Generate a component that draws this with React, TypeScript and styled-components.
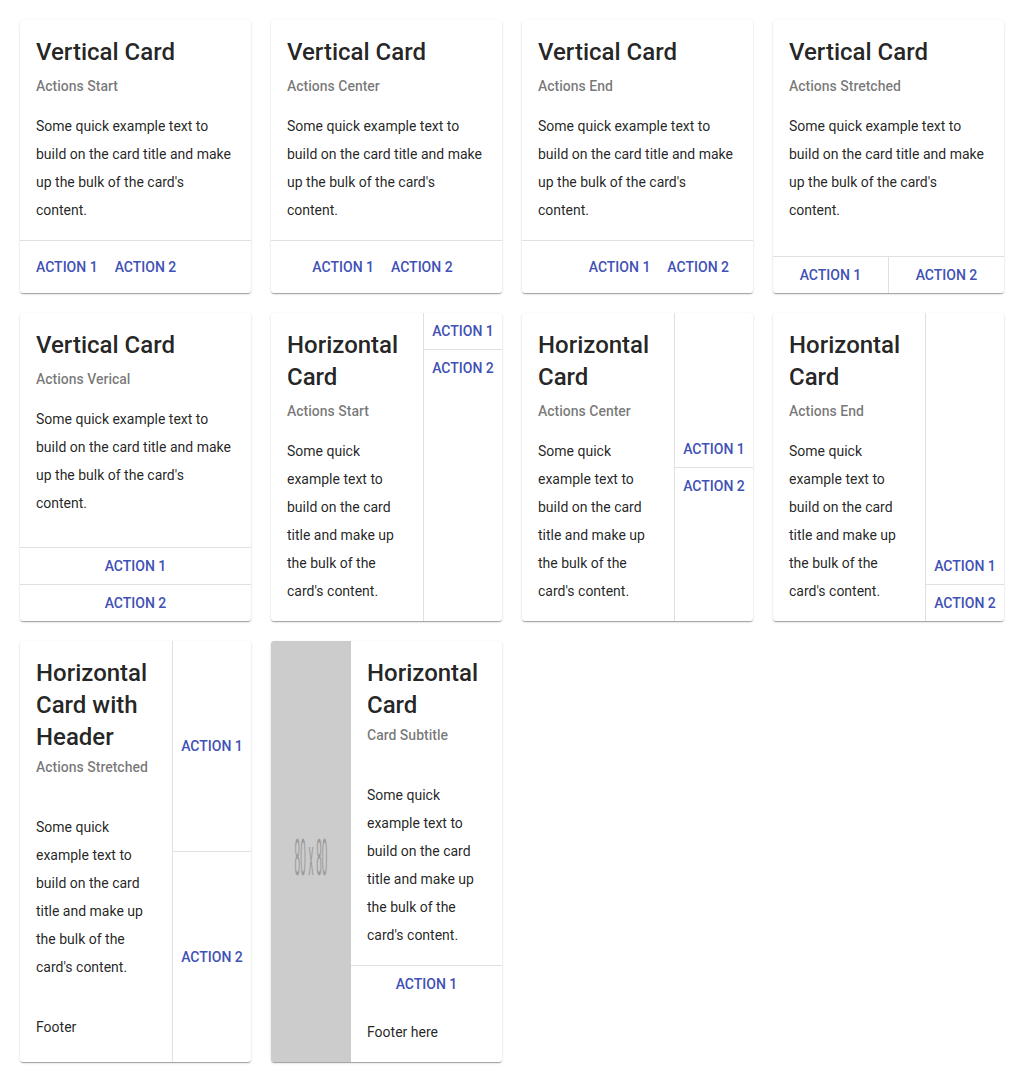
import React from "react";
import styled, { createGlobalStyle, css } from "styled-components";

const Global = createGlobalStyle`
  html, body { margin: 0; padding: 0; background: #ffffff; }
  body { font-family: Roboto, "Noto Sans", sans-serif; -webkit-font-smoothing: antialiased; }
  * { box-sizing: border-box; }
`;

const Page = styled.div`
  display: grid;
  grid-template-columns: repeat(4, 231px);
  column-gap: 20px;
  row-gap: 20px;
  padding: 20px;
  align-items: stretch;
`;

const Card = styled.div<{ $horizontal?: boolean }>`
  display: flex;
  flex-direction: ${(p) => (p.$horizontal ? "row" : "column")};
  background: #fff;
  border-radius: 3px;
  overflow: hidden;
  box-shadow: 0 2px 1px -1px rgba(0, 0, 0, 0.2), 0 1px 1px 0 rgba(0, 0, 0, 0.14),
    0 1px 3px 0 rgba(0, 0, 0, 0.12);
  color: rgba(0, 0, 0, 0.87);
`;

const Main = styled.div`
  display: flex;
  flex-direction: column;
  flex: 1;
  min-width: 0;
`;

const Content = styled.div<{ $grow?: boolean }>`
  padding: 16px;
  ${(p) => p.$grow && "flex: 1;"}
`;

const Header = styled.div`
  padding: 16px 16px 20px;
`;

const Title = styled.h2`
  margin: 0;
  font-size: 24px;
  line-height: 32px;
  font-weight: 500;
  color: rgba(0, 0, 0, 0.87);
`;

const Subtitle = styled.div<{ $tight?: boolean }>`
  margin-top: ${(p) => (p.$tight ? "4px" : "8px")};
  font-size: 14px;
  line-height: 20px;
  font-weight: 500;
  color: rgba(0, 0, 0, 0.54);
`;

const Text = styled.p<{ $flush?: boolean }>`
  margin: ${(p) => (p.$flush ? "0" : "16px 0 0")};
  font-size: 14px;
  line-height: 28px;
  font-weight: 400;
  color: rgba(0, 0, 0, 0.87);
`;

const Body = styled.div`
  padding: 16px;
`;

const Footer = styled.div`
  padding: 16px;
  font-size: 14px;
  line-height: 28px;
  color: rgba(0, 0, 0, 0.87);
`;

type BarVariant = "start" | "center" | "end" | "stretch" | "vertical";

const Button = styled.button`
  display: flex;
  align-items: center;
  justify-content: center;
  height: 36px;
  padding: 0 8px;
  margin: 0;
  border: none;
  background: transparent;
  font-family: Roboto, "Noto Sans", sans-serif;
  font-size: 14px;
  font-weight: 500;
  letter-spacing: 0;
  text-transform: uppercase;
  color: #3f51b5;
  cursor: pointer;
`;

const ActionBar = styled.div<{ $variant: BarVariant }>`
  display: flex;
  border-top: 1px solid #e0e0e0;
  ${(p) =>
    p.$variant === "start" || p.$variant === "center" || p.$variant === "end"
      ? css`
          padding: 8px 16px 8px 8px;
          gap: 1px;
          justify-content: ${p.$variant === "start"
            ? "flex-start"
            : p.$variant === "center"
            ? "center"
            : "flex-end"};
        `
      : p.$variant === "stretch"
      ? css`
          padding: 0;
          & > button {
            flex: 1;
          }
          & > button + button {
            border-left: 1px solid #e0e0e0;
          }
        `
      : css`
          flex-direction: column;
          padding: 0;
          & > button {
            width: 100%;
          }
          & > button + button {
            border-top: 1px solid #e0e0e0;
            height: 37px;
          }
        `}
`;

type SideAlign = "start" | "center" | "end" | "stretch";

const SideActions = styled.div<{ $align: SideAlign }>`
  display: flex;
  flex-direction: column;
  width: 79px;
  flex-shrink: 0;
  border-left: 1px solid #e0e0e0;
  justify-content: ${(p) =>
    p.$align === "start"
      ? "flex-start"
      : p.$align === "center"
      ? "center"
      : p.$align === "end"
      ? "flex-end"
      : "stretch"};
  & > button {
    width: 100%;
    padding: 0;
    flex: ${(p) => (p.$align === "stretch" ? "1" : "none")};
    ${(p) => p.$align === "stretch" && "height: auto;"}
  }
  & > button + button {
    border-top: 1px solid #e0e0e0;
    ${(p) => p.$align !== "stretch" && "height: 37px;"}
  }
`;

const Media = styled.div`
  width: 80px;
  flex-shrink: 0;
  background: #cccccc;
  display: flex;
`;

const MediaSvg = styled.svg`
  width: 100%;
  height: 100%;
  display: block;
`;

const BODY = "Some quick example text to build on the card title and make up the bulk of the card's content.";

function VerticalCard({ subtitle, variant }: { subtitle: string; variant: BarVariant }) {
  return (
    <Card>
      <Content $grow>
        <Title>Vertical Card</Title>
        <Subtitle>{subtitle}</Subtitle>
        <Text>{BODY}</Text>
      </Content>
      <ActionBar $variant={variant}>
        <Button>Action 1</Button>
        <Button>Action 2</Button>
      </ActionBar>
    </Card>
  );
}

function HorizontalCard({ subtitle, align }: { subtitle: string; align: SideAlign }) {
  return (
    <Card $horizontal>
      <Main>
        <Content>
          <Title>Horizontal Card</Title>
          <Subtitle>{subtitle}</Subtitle>
          <Text>{BODY}</Text>
        </Content>
      </Main>
      <SideActions $align={align}>
        <Button>Action 1</Button>
        <Button>Action 2</Button>
      </SideActions>
    </Card>
  );
}

export default function App() {
  return (
    <>
      <Global />
      <Page>
        <VerticalCard subtitle="Actions Start" variant="start" />
        <VerticalCard subtitle="Actions Center" variant="center" />
        <VerticalCard subtitle="Actions End" variant="end" />
        <VerticalCard subtitle="Actions Stretched" variant="stretch" />

        <VerticalCard subtitle="Actions Verical" variant="vertical" />
        <HorizontalCard subtitle="Actions Start" align="start" />
        <HorizontalCard subtitle="Actions Center" align="center" />
        <HorizontalCard subtitle="Actions End" align="end" />

        <Card $horizontal>
          <Main>
            <Header>
              <Title>Horizontal Card with Header</Title>
              <Subtitle $tight>Actions Stretched</Subtitle>
            </Header>
            <Body>
              <Text $flush>{BODY}</Text>
            </Body>
            <Footer>Footer</Footer>
          </Main>
          <SideActions $align="stretch">
            <Button>Action 1</Button>
            <Button>Action 2</Button>
          </SideActions>
        </Card>

        <Card $horizontal>
          <Media>
            <MediaSvg viewBox="0 0 80 80" preserveAspectRatio="none">
              <text
                x="40"
                y="41"
                textAnchor="middle"
                dominantBaseline="central"
                fontFamily="'Liberation Sans', Arial, sans-serif"
                fontSize="10"
                fill="#9a9a9a"
              >
                80 x 80
              </text>
            </MediaSvg>
          </Media>
          <Main>
            <Header>
              <Title>Horizontal Card</Title>
              <Subtitle $tight>Card Subtitle</Subtitle>
            </Header>
            <Body>
              <Text $flush>{BODY}</Text>
            </Body>
            <ActionBar $variant="stretch">
              <Button>Action 1</Button>
            </ActionBar>
            <Footer>Footer here</Footer>
          </Main>
        </Card>
      </Page>
    </>
  );
}
